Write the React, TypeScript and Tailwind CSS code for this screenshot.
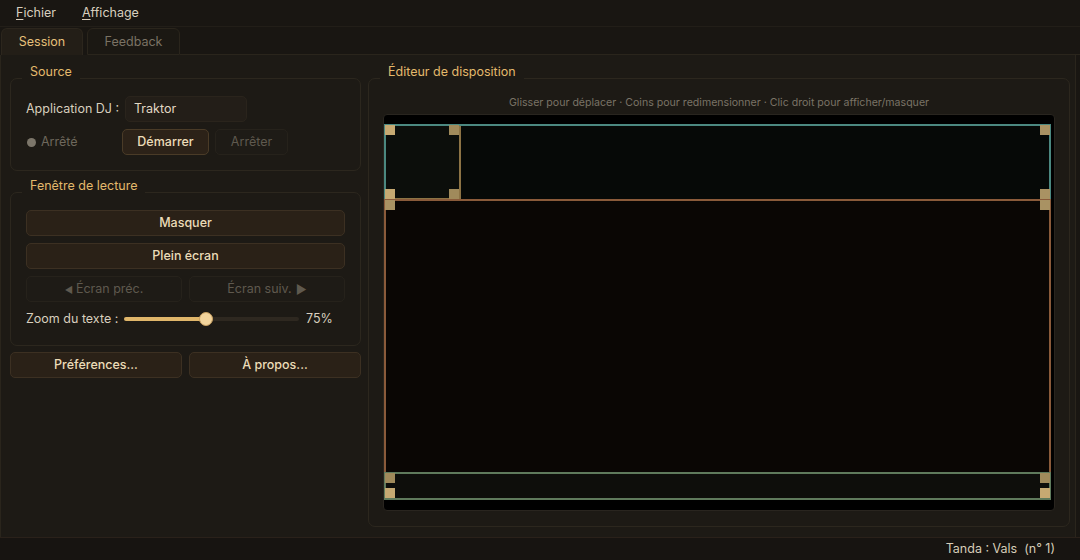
import React from "react"

const font = "font-['Inter','Liberation_Sans',sans-serif]"

function Group({
  title,
  className,
  children
}: {
  title: string
  className?: string
  children: React.ReactNode
}) {
  return (
    <div className={`flex flex-col ${className ?? ""}`}>
      <div className="relative z-10 ml-[12px] h-[16px] self-start bg-[#1d1a15] px-[8px] pt-px text-[12.5px] leading-[16px] text-[#e3b96c]">
        {title}
      </div>
      <div className="-mt-px flex flex-1 flex-col rounded-[7px] border border-[#2c271e]">
        {children}
      </div>
    </div>
  )
}

function Btn({
  children,
  disabled,
  className
}: {
  children: React.ReactNode
  disabled?: boolean
  className?: string
}) {
  return (
    <button
      className={`flex h-[26px] items-center justify-center rounded-[5px] border pt-px text-[12.5px] ${
        disabled
          ? "border-[#26221b] bg-[#1e1b16] text-[#5f594e]"
          : "border-[#3c3022] bg-[#2a2117] font-medium text-[#ecdcb8]"
      } ${className ?? ""}`}
    >
      {children}
    </button>
  )
}

function Handle({ x, y, tone }: { x: number; y: number; tone: "light" | "mid" | "dark" }) {
  const c =
    tone === "light" ? "bg-[#c6a972]" : tone === "mid" ? "bg-[#a99263]" : "bg-[#a08a5b]"
  return <div className={`absolute h-[10px] w-[10px] ${c}`} style={{ left: x, top: y }} />
}

export default function App() {
  return (
    <div className={`flex h-[560px] w-[1080px] flex-col bg-[#191612] ${font} text-[12.5px] text-[#d8cfbe]`}>
      {/* Menu bar */}
      <div className="flex h-[27px] items-center gap-[26px] border-b border-[#221e18] pl-[16px] pt-px">
        <span>
          <span className="underline underline-offset-2">F</span>ichier
        </span>
        <span>
          <span className="underline underline-offset-2">A</span>ffichage
        </span>
      </div>

      {/* Tabs */}
      <div className="flex h-[28px] items-end">
        <div className="ml-px flex h-[27px] w-[82px] items-center justify-center rounded-t-[6px] border border-b-0 border-[#2c261d] bg-[#231e17] pt-px text-[#e6c07a]">
          Session
        </div>
        <div className="ml-[4px] flex h-[27px] w-[93px] items-center justify-center rounded-t-[6px] border border-[#2a251c] bg-[#1b1813] pt-px text-[#7a7264]">
          Feedback
        </div>
        <div className="h-px flex-1 bg-[#2a251c]" />
      </div>

      {/* Pane */}
      <div className="flex h-[482px] w-[1076px] gap-[7px] border-x border-[#2a251c] bg-[#1d1a15] pb-[10px] pl-[9px] pr-[5px] pt-[8px]">
        {/* Left column */}
        <div className="flex w-[351px] flex-col">
          <Group title="Source">
            <div className="flex flex-col gap-[7px] px-[15px] pb-[15px] pt-[17px]">
              <div className="flex items-center">
                <span className="w-[99px] pt-px">Application DJ :</span>
                <div className="flex h-[26px] w-[122px] items-center rounded-[5px] border border-[#2a241c] bg-[#231e18] pl-[8px] pt-px text-[#e2d8c4]">
                  Traktor
                </div>
              </div>
              <div className="flex items-center">
                <span className="ml-px mr-[5px] h-[9px] w-[9px] rounded-full bg-[#7c766a]" />
                <span className="w-[81px] pt-px text-[#6e685c]">Arrêté</span>
                <Btn className="w-[87px] border-[#4a3b27] bg-[#2c2218]">Démarrer</Btn>
                <Btn disabled className="ml-[6px] w-[73px]">
                  Arrêter
                </Btn>
              </div>
            </div>
          </Group>

          <Group title="Fenêtre de lecture" className="mt-[6px]">
            <div className="flex flex-col gap-[7px] px-[15px] pb-[16px] pt-[17px]">
              <Btn>Masquer</Btn>
              <Btn>Plein écran</Btn>
              <div className="flex gap-[7px]">
                <Btn disabled className="flex-1">
                  <span className="mr-[3px] text-[9px]">◀</span>Écran préc.
                </Btn>
                <Btn disabled className="flex-1">
                  Écran suiv.<span className="ml-[4px] text-[12px]">▶</span>
                </Btn>
              </div>
              <div className="flex h-[20px] items-center">
                <span className="w-[98px] pt-px">Zoom du texte :</span>
                <div className="relative h-[16px] w-[175px]">
                  <div className="absolute left-0 right-0 top-[6px] h-[4px] rounded-full bg-[#2e2820]" />
                  <div className="absolute left-0 top-[6px] h-[4px] w-[82px] rounded-full bg-[#e0b66a]" />
                  <div className="absolute left-[75px] top-px h-[14px] w-[14px] rounded-full border border-[#c9a060] bg-[#f2d49c]" />
                </div>
                <span className="ml-[7px] pt-px">75%</span>
              </div>
            </div>
          </Group>

          <div className="mt-[6px] flex gap-[7px]">
            <Btn className="w-[172px]">Préférences...</Btn>
            <Btn className="flex-1">À propos...</Btn>
          </div>
        </div>

        {/* Right column */}
        <Group title="Éditeur de disposition" className="w-[702px]">
          <div className="flex flex-1 flex-col px-[14px] pb-[15px] pt-[16px]">
            <div className="mb-[4px] pt-px text-center text-[10.6px] leading-[14px] text-[#7a7366]">
              Glisser pour déplacer · Coins pour redimensionner · Clic droit pour afficher/masquer
            </div>
            <div className="relative flex-1 rounded-[4px] border border-[#29251f] bg-black">
              {/* top band */}
              <div className="absolute left-0 top-[9px] h-[77px] w-[667px] border-2 border-b-[#4d4535] border-l-[#4b8880] border-r-[#4b8880] border-t-[#4b8880] bg-[#060907]" />
              <div className="absolute left-[2px] top-[11px] h-[74px] w-[75px] border-b-2 border-r-2 border-[#8c7345] bg-[#0c0e0b]" />
              {/* middle band */}
              <div className="absolute left-0 top-[84px] h-[280px] w-[667px] border-2 border-[#8a5a3a] bg-[#0a0604]" />
              {/* bottom band */}
              <div className="absolute left-0 top-[357px] h-[28px] w-[667px] border-2 border-[#5f7a5c] bg-[#0e0e0b]" />

              <Handle x={1} y={10} tone="light" />
              <Handle x={65} y={10} tone="dark" />
              <Handle x={656} y={10} tone="mid" />
              <Handle x={1} y={74} tone="light" />
              <Handle x={65} y={74} tone="dark" />
              <Handle x={656} y={74} tone="mid" />
              <Handle x={1} y={85} tone="mid" />
              <Handle x={656} y={85} tone="mid" />
              <Handle x={1} y={358} tone="dark" />
              <Handle x={1} y={373} tone="light" />
              <Handle x={656} y={358} tone="dark" />
              <Handle x={656} y={373} tone="light" />
            </div>
          </div>
        </Group>
      </div>

      {/* Status bar */}
      <div className="flex flex-1 items-center justify-end border-t border-[#2a211a] bg-[#171411] pr-[25px] pt-px text-[#d6cdb8]">
        Tanda : Vals&nbsp;&nbsp;(n° 1)
      </div>
    </div>
  )
}
